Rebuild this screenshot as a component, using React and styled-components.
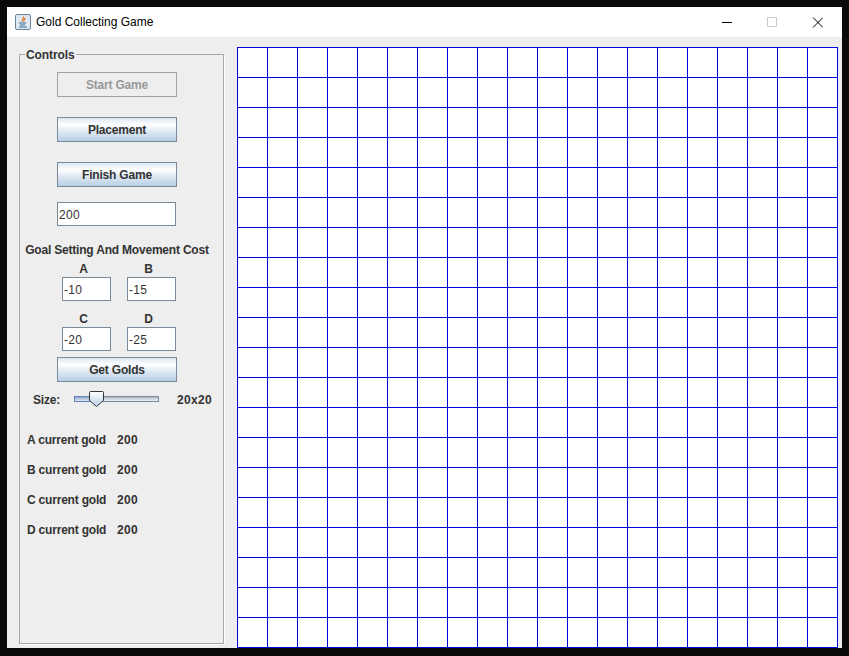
import React from "react";
import styled, { createGlobalStyle } from "styled-components";

const Global = createGlobalStyle`
  html, body {
    margin: 0;
    padding: 0;
    background: #0a0a0a;
  }
  * {
    box-sizing: border-box;
  }
`;

const Screen = styled.div`
  width: 849px;
  height: 656px;
  padding: 7px;
  background: #0a0a0a;
  overflow: hidden;
`;
const Frame = styled.div`
  width: 835px;
  height: 641px;
  background: #eeeeee;
  display: flex;
  flex-direction: column;
`;

// title bar
const TitleBar = styled.div`
  height: 30px;
  background: #fff;
  display: flex;
  align-items: center;
  padding-left: 8px;
  font-family: "Liberation Sans", Arial, sans-serif;
  font-size: 12px;
  color: #000;
`;
const TitleText = styled.span`
  margin-left: 5px;
  flex: 1;
`;
const WinButtons = styled.div`
  display: flex;
  height: 30px;
  padding-right: 2px;
`;
const WinButton = styled.div`
  width: 45px;
  height: 30px;
  display: flex;
  align-items: center;
  justify-content: center;
`;

const Body = styled.div`
  flex: 1;
  display: flex;
  padding: 10px 0 0 12px;
`;

// left side
const Controls = styled.fieldset`
  width: 205px;
  height: 597px;
  margin: 0 13px 0 0;
  padding: 0;
  border: 1px solid #a8a8a8;
  box-shadow: 1px 1px 0 #fff;
  font-family: "Liberation Sans", Arial, sans-serif;
  font-size: 12px;
  font-weight: 700;
  letter-spacing: -0.2px;
  color: #333;
`;
const Legend = styled.legend`
  margin-left: 5px;
  padding: 0 1px;
  font-size: 12px;
  font-weight: 700;
  letter-spacing: -0.1px;
  line-height: 14px;
  transform: translateY(1px);
`;
const Stack = styled.div`
  display: flex;
  flex-direction: column;
  align-items: center;
  width: 100%;
  padding: 11px 9px 0 0;
`;
const Button = styled.div`
  width: 120px;
  height: 25px;
  margin-top: ${(p) => p.$top ?? 0}px;
  margin-bottom: ${(p) => p.$gap ?? 20}px;
  display: flex;
  align-items: center;
  justify-content: center;
  border: 1px solid ${(p) => (p.$disabled ? "#a3a3a3" : "#7a8a99")};
  color: ${(p) => (p.$disabled ? "#999" : "#333")};
  background: ${(p) =>
    p.$disabled
      ? "#eeeeee"
      : "linear-gradient(to bottom, #dde8f3 0%, #fff 30%, #e6eef6 50%, #b8cfe5 100%)"};
`;
const Field = styled.div`
  width: ${(p) => p.$width}px;
  height: 24px;
  padding: 2px 0 0 1px;
  background: #fff;
  border: 1px solid #7a8a99;
  display: flex;
  align-items: center;
  font-weight: 400;
  letter-spacing: 0.3px;
  color: #333;
`;
const AmountField = styled(Field)`
  margin-right: 1px;
`;
const Heading = styled.div`
  margin-top: 17px;
  height: 14px;
  line-height: 14px;
  white-space: nowrap;
`;
const CostRow = styled.div`
  display: flex;
  gap: 16px;
  margin-top: ${(p) => p.$top}px;
  margin-left: 4px;
`;
const Cost = styled.div`
  width: 49px;
  display: flex;
  flex-direction: column;
  align-items: center;
  gap: 1px;
`;
const CostName = styled.div`
  height: 14px;
  line-height: 14px;
  margin-right: 6px;
`;
const SizeRow = styled.div`
  width: 100%;
  height: 22px;
  margin-top: -14px;
  padding-left: 13px;
  display: flex;
  align-items: center;
`;
const SizeLabel = styled.span`
  width: 41px;
  padding-top: 2px;
`;
const Track = styled.div`
  position: relative;
  width: 85px;
  height: 6px;
  margin-right: 18px;
  border: 1px solid #7a8a99;
  background: linear-gradient(to bottom, #a9b6c3, #eef2f6);
`;
const TrackFill = styled.div`
  width: 16px;
  height: 6px;
  margin: -1px 0 0 -1px;
  border: 1px solid #6382bf;
  background: linear-gradient(to bottom, #8fa8c6, #dde8f3);
`;
const Thumb = styled.svg`
  position: absolute;
  left: 14px;
  top: -6px;
`;
const Num = styled.span`
  letter-spacing: 0.3px;
`;
const SizeValue = styled(Num)`
  padding-top: 2px;
`;
const Scores = styled.div`
  width: 100%;
  padding: 23px 0 0 7px;
  display: flex;
  flex-direction: column;
  gap: 16px;
`;
const Score = styled.div`
  display: flex;
  height: 14px;
  line-height: 14px;
`;
const ScoreName = styled.span`
  width: 90px;
`;

// board
const Board = styled.div`
  width: 601px;
  height: 601px;
  display: grid;
  grid-template-columns: repeat(20, 30px);
  grid-auto-rows: 30px;
  border-right: 1px solid #0000dd;
  border-bottom: 1px solid #0000dd;
`;
const Cell = styled.div`
  background: #fff;
  border-left: 1px solid #0000dd;
  border-top: 1px solid #0000dd;
`;

const CostField = ({ name, value }) => (
  <Cost>
    <CostName>{name}</CostName>
    <Field $width={49}>{value}</Field>
  </Cost>
);

const players = ["A", "B", "C", "D"];

export default function App() {
  return (
    <Screen>
      <Global />
      <Frame>
        <TitleBar>
          <svg width="16" height="16" viewBox="0 0 16 16">
            <rect x="0.5" y="0.5" width="15" height="15" rx="1.5" fill="#dfe8f0" stroke="#6d8296" />
            <path d="M8.500 2.500c1 2-2.500 3-1 5M10 4c0 1.500-2 2-1 3.500" fill="none" stroke="#e0701a" strokeWidth="1.200" />
            <path d="M4 9h7M5 11h5M4 13h8" stroke="#3d6d96" strokeWidth="1" />
          </svg>
          <TitleText>Gold Collecting Game</TitleText>
          <WinButtons>
            <WinButton>
              <svg width="11" height="11" viewBox="0 0 11 11">
                <path d="M0 5.500h10" stroke="#000" />
              </svg>
            </WinButton>
            <WinButton>
              <svg width="11" height="11" viewBox="0 0 11 11">
                <rect x="0.500" y="0.500" width="9" height="9" fill="none" stroke="#ccc" />
              </svg>
            </WinButton>
            <WinButton>
              <svg width="11" height="11" viewBox="0 0 11 11">
                <path d="M1 0.500l10 10M11 0.500l-10 10" stroke="#000" />
              </svg>
            </WinButton>
          </WinButtons>
        </TitleBar>
        <Body>
          <Controls>
            <Legend>Controls</Legend>
            <Stack>
              <Button $disabled>Start Game</Button>
              <Button>Placement</Button>
              <Button $gap={15}>Finish Game</Button>
              <AmountField $width={119}>200</AmountField>
              <Heading>Goal Setting And Movement Cost</Heading>
              <CostRow $top={5}>
                <CostField name="A" value="-10" />
                <CostField name="B" value="-15" />
              </CostRow>
              <CostRow $top={11}>
                <CostField name="C" value="-20" />
                <CostField name="D" value="-25" />
              </CostRow>
              <Button $top={6}>Get Golds</Button>
              <SizeRow>
                <SizeLabel>Size:</SizeLabel>
                <Track>
                  <TrackFill />
                  <Thumb width="15" height="16" viewBox="0 0 15 16">
                    <defs>
                      <linearGradient id="thumbFill" x1="0" y1="0" x2="0" y2="1">
                        <stop offset="0" stopColor="#fff" />
                        <stop offset="1" stopColor="#b8cfe5" />
                      </linearGradient>
                    </defs>
                    <path d="M0.500 1.500q0-1 1-1h12q1 0 1 1v8l-7 6-7-6z" fill="url(#thumbFill)" stroke="#333" />
                  </Thumb>
                </Track>
                <SizeValue>20x20</SizeValue>
              </SizeRow>
              <Scores>
                {players.map((p) => (
                  <Score key={p}>
                    <ScoreName>{p} current gold</ScoreName>
                    <Num>200</Num>
                  </Score>
                ))}
              </Scores>
            </Stack>
          </Controls>
          <Board>
            {Array.from({ length: 400 }, (_, i) => (
              <Cell key={i} />
            ))}
          </Board>
        </Body>
      </Frame>
    </Screen>
  );
}
